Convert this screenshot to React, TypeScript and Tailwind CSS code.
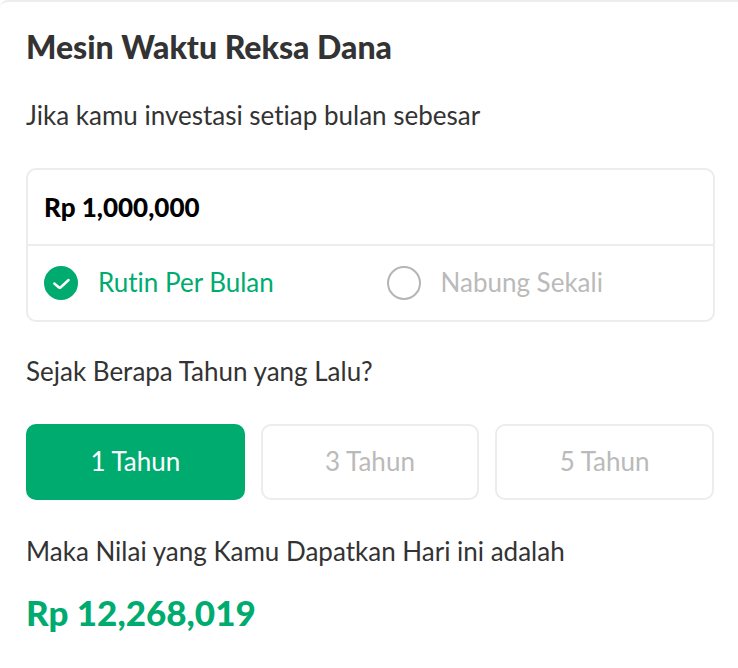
import { clsx } from "clsx";
import React, { useState } from "react";

const plans = [
  { id: "monthly", label: "Rutin Per Bulan" },
  { id: "once", label: "Nabung Sekali" },
];

const years = [1, 3, 5];

const PlanOption = ({
  id,
  label,
  checked,
  onChange,
}: {
  id: string;
  label: string;
  checked: boolean;
  onChange: () => void;
}) => {
  return (
    <label
      htmlFor={id}
      className={clsx(
        "flex items-center gap-5 px-4 py-5 leading-8 cursor-pointer",
        checked ? "text-[#00ab6f]" : "text-[#bababa]"
      )}
    >
      <span className="grid size-[34px] shrink-0">
        <input
          id={id}
          type="radio"
          name="plan"
          checked={checked}
          onChange={onChange}
          className="col-start-1 row-start-1 size-[34px] appearance-none rounded-full border-2 border-[#b5b5b5] checked:border-[#00ab6f] checked:bg-[#00ab6f]"
        />
        {checked && (
          <svg
            viewBox="0 0 34 34"
            fill="none"
            stroke="white"
            strokeWidth="2.4"
            strokeLinecap="round"
            strokeLinejoin="round"
            className="pointer-events-none col-start-1 row-start-1 size-[34px]"
          >
            <path d="M10.3 17.5l4.7 4a1.2 1.2 0 0 0 1.5 0L24.6 14" />
          </svg>
        )}
      </span>
      <span className="pb-0.5">{label}</span>
    </label>
  );
};

const App = () => {
  const [amount, setAmount] = useState("Rp 1,000,000");
  const [plan, setPlan] = useState("monthly");
  const [year, setYear] = useState(1);

  return (
    <main className="rounded-tl-lg border-t-2 border-[#ececec] bg-white pt-6 pr-[23px] pb-8 pl-[26px] font-['Lato','Liberation_Sans',sans-serif] text-[26px] leading-9 text-[#333333] [font-variant-ligatures:none]">
      <h1 className="text-[32px] leading-[42px] font-black">
        Mesin Waktu Reksa Dana
      </h1>

      <label htmlFor="amount" className="mt-[29px] block">
        Jika kamu investasi setiap bulan sebesar
      </label>

      <div className="mt-[35px] rounded-[10px] border-2 border-[#ececec]">
        <input
          id="amount"
          type="text"
          value={amount}
          onChange={(e) => setAmount(e.target.value)}
          className="block h-[74px] w-full rounded-t-lg px-4 font-black text-black outline-none"
        />
        <div className="grid grid-cols-2 border-t-2 border-[#ececec]">
          {plans.map((item) => (
            <PlanOption
              key={item.id}
              id={item.id}
              label={item.label}
              checked={plan === item.id}
              onChange={() => setPlan(item.id)}
            />
          ))}
        </div>
      </div>

      <p className="mt-[31px]">Sejak Berapa Tahun yang Lalu?</p>

      <div className="mt-[35px] grid grid-cols-3 gap-4 pr-px">
        {years.map((item) => (
          <button
            key={item}
            type="button"
            onClick={() => setYear(item)}
            className={clsx(
              "h-[76px] rounded-[10px] border-2 pb-0.5",
              year === item
                ? "border-[#00ab6f] bg-[#00ab6f] text-white"
                : "border-[#ececec] bg-white text-[#bababa]"
            )}
          >
            {item} Tahun
          </button>
        ))}
      </div>

      <p className="mt-[33px]">Maka Nilai yang Kamu Dapatkan Hari ini adalah</p>

      <p className="mt-[18px] text-[35px] leading-[50px] font-black text-[#00ab6f]">
        Rp 12,268,019
      </p>
    </main>
  );
};

export default App;
